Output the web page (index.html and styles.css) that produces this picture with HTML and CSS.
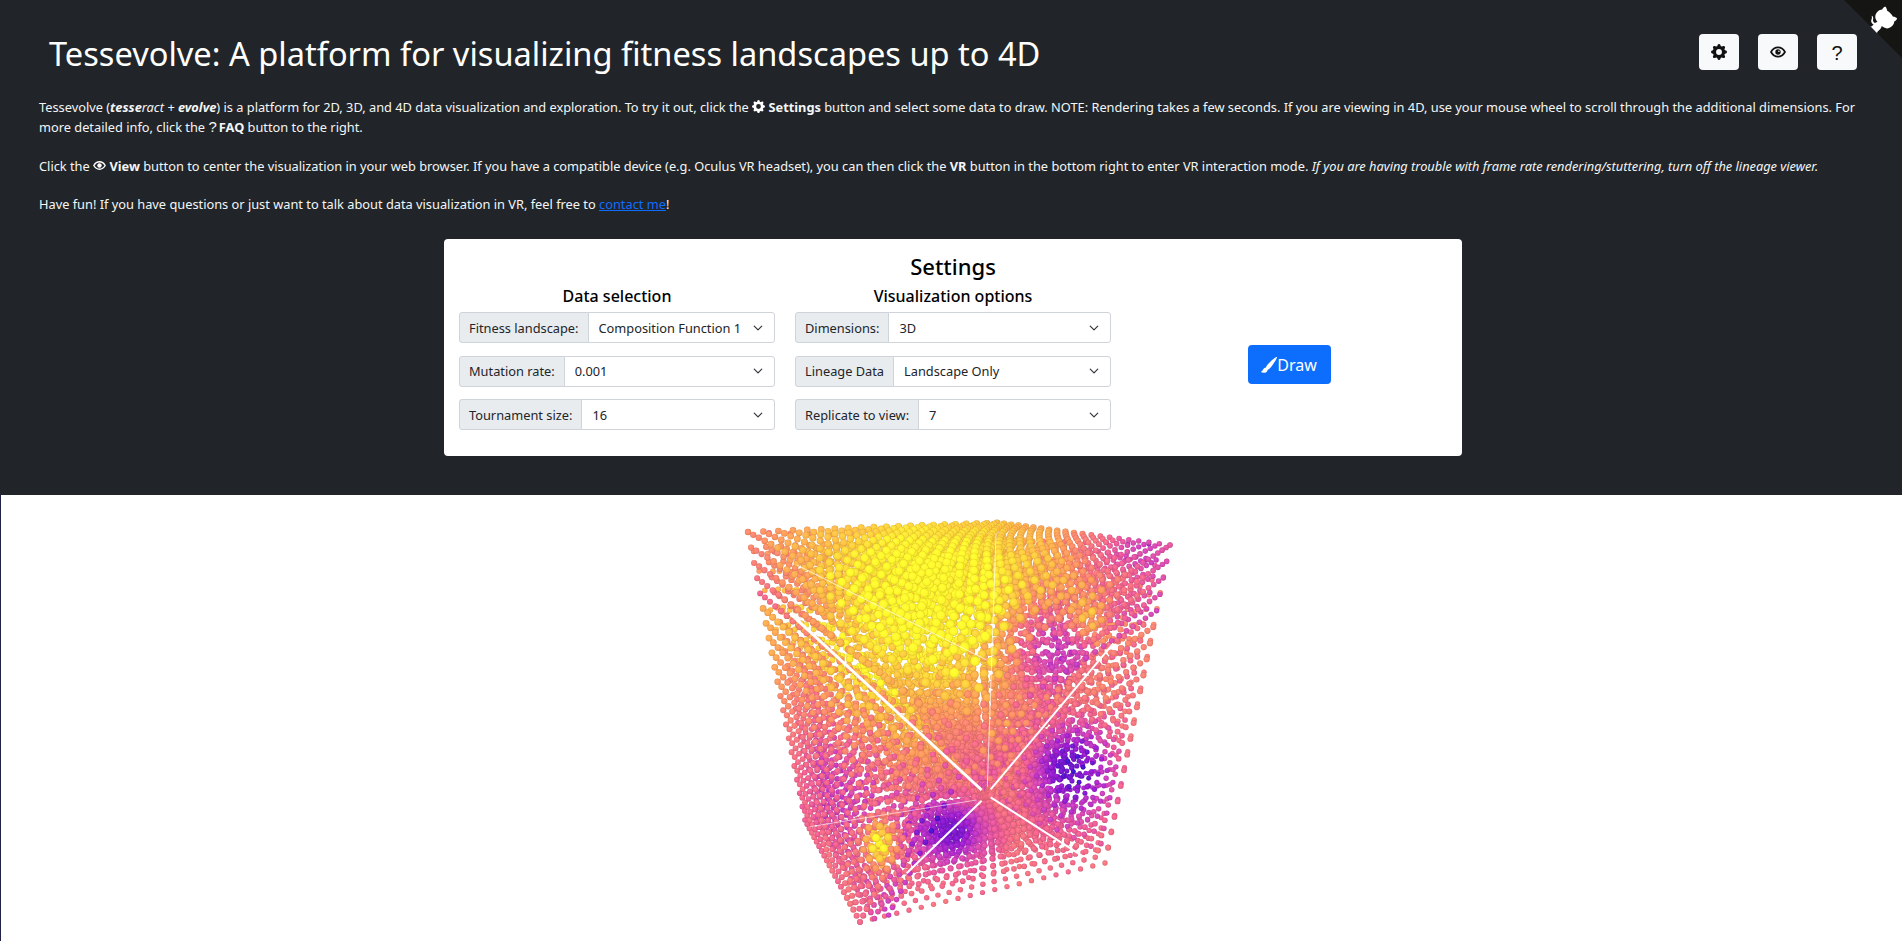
FILE: index.html
```html
<!DOCTYPE html>
<html lang="en">
<head>
    <meta charset="UTF-8">
    <meta name="viewport" content="width=device-width, initial-scale=1.0">
    <title>Tessevolve</title>
    <link rel="stylesheet" href="styles.css">
</head>
<body>
    <a class="github-corner" href="#" aria-label="View source on GitHub">
        <svg viewBox="0 0 250 250" aria-hidden="true">
            <path class="corner-bg" d="M0,0 L115,115 L130,115 L142,142 L250,250 L250,0 Z"></path>
            <path class="octo" d="M128.3,109.0 C113.8,99.7 119.0,89.6 119.0,89.6 C122.0,82.7 120.5,78.6 120.5,78.6 C119.2,72.0 123.4,76.3 123.4,76.3 C127.3,80.9 125.5,87.3 125.5,87.3 C122.9,97.6 130.6,101.9 134.4,103.2"></path>
            <path class="octo" d="M115.0,115.0 C114.9,115.1 118.7,116.5 119.8,115.4 L133.7,101.6 C136.9,99.2 139.9,98.4 142.2,98.6 C133.8,88.0 127.5,74.4 143.8,58.0 C148.5,53.4 154.0,51.2 159.7,51.0 C160.3,49.4 163.2,43.6 171.4,40.1 C171.4,40.1 176.1,42.5 178.8,56.2 C183.1,58.6 187.2,61.8 190.9,65.4 C194.5,69.0 197.7,73.2 200.1,77.6 C213.8,80.2 216.3,84.9 216.3,84.9 C212.7,93.1 206.9,96.0 205.4,96.6 C205.1,102.4 203.0,107.8 198.3,112.5 C181.9,128.9 168.3,122.5 157.7,114.1 C157.9,116.9 156.7,120.9 152.7,124.9 L141.0,136.5 C139.8,137.7 141.6,141.9 141.8,141.8 Z"></path>
        </svg>
    </a>

    <header class="top-panel">
        <div class="title-row">
            <h1>Tessevolve: A platform for visualizing fitness landscapes up to 4D</h1>
            <div class="top-buttons">
                <button class="btn-light" aria-label="Settings">
                    <svg class="icon" viewBox="0 0 16 16"><path d="M9.405 1.05c-.413-1.4-2.397-1.4-2.81 0l-.1.34a1.464 1.464 0 0 1-2.105.872l-.31-.17c-1.283-.698-2.686.705-1.987 1.987l.169.311c.446.82.023 1.841-.872 2.105l-.34.1c-1.4.413-1.4 2.397 0 2.81l.34.1a1.464 1.464 0 0 1 .872 2.105l-.17.31c-.698 1.283.705 2.686 1.987 1.987l.311-.169a1.464 1.464 0 0 1 2.105.872l.1.34c.413 1.4 2.397 1.4 2.81 0l.1-.34a1.464 1.464 0 0 1 2.105-.872l.31.17c1.283.698 2.686-.705 1.987-1.987l-.169-.311a1.464 1.464 0 0 1 .872-2.105l.34-.1c1.4-.413 1.4-2.397 0-2.81l-.34-.1a1.464 1.464 0 0 1-.872-2.105l.17-.31c.698-1.283-.705-2.686-1.987-1.987l-.311.169a1.464 1.464 0 0 1-2.105-.872l-.1-.34zM8 10.93a2.929 2.929 0 1 1 0-5.86 2.929 2.929 0 0 1 0 5.858z"></path></svg>
                </button>
                <button class="btn-light" aria-label="View">
                    <svg class="icon" viewBox="0 0 16 16"><path class="eye-line" d="M1 8s2.6-4.6 7-4.6S15 8 15 8s-2.6 4.6-7 4.6S1 8 1 8z"></path><circle cx="8" cy="8" r="2.7"></circle><circle class="eye-glint" cx="8.9" cy="7.2" r=".8"></circle></svg>
                </button>
                <button class="btn-light btn-faq" aria-label="FAQ">?</button>
            </div>
        </div>

        <p class="intro">
            Tessevolve (<em><b>tesse</b>ract + <b>e</b><b>volve</b></em>) is a platform for 2D, 3D, and 4D data visualization and exploration. To try it out, click the
            <svg class="icon-inline" viewBox="0 0 16 16"><path d="M9.405 1.05c-.413-1.4-2.397-1.4-2.81 0l-.1.34a1.464 1.464 0 0 1-2.105.872l-.31-.17c-1.283-.698-2.686.705-1.987 1.987l.169.311c.446.82.023 1.841-.872 2.105l-.34.1c-1.4.413-1.4 2.397 0 2.81l.34.1a1.464 1.464 0 0 1 .872 2.105l-.17.31c-.698 1.283.705 2.686 1.987 1.987l.311-.169a1.464 1.464 0 0 1 2.105.872l.1.34c.413 1.4 2.397 1.4 2.81 0l.1-.34a1.464 1.464 0 0 1 2.105-.872l.31.17c1.283.698 2.686-.705 1.987-1.987l-.169-.311a1.464 1.464 0 0 1 .872-2.105l.34-.1c1.4-.413 1.4-2.397 0-2.81l-.34-.1a1.464 1.464 0 0 1-.872-2.105l.17-.31c.698-1.283-.705-2.686-1.987-1.987l-.311.169a1.464 1.464 0 0 1-2.105-.872l-.1-.34zM8 10.93a2.929 2.929 0 1 1 0-5.86 2.929 2.929 0 0 1 0 5.858z"></path></svg>
            <b>Settings</b> button and select some data to draw. NOTE: Rendering takes a few seconds. If you are viewing in 4D, use your mouse wheel to scroll through the additional dimensions. For more detailed info, click the <span class="q-inline">?</span><b>FAQ</b> button to the right.
            <br><br>
            Click the
            <svg class="icon-inline" viewBox="0 0 16 16"><path class="eye-line" d="M1 8s2.6-4.6 7-4.6S15 8 15 8s-2.6 4.6-7 4.6S1 8 1 8z"></path><circle cx="8" cy="8" r="2.7"></circle></svg>
            <b>View</b> button to center the visualization in your web browser. If you have a compatible device (e.g. Oculus VR headset), you can then click the <b>VR</b> button in the bottom right to enter VR interaction mode. <em>If you are having trouble with frame rate rendering/stuttering, turn off the lineage viewer.</em>
            <br><br>
            Have fun! If you have questions or just want to talk about data visualization in VR, feel free to <a href="#">contact me</a>!
        </p>

        <section class="settings-card">
            <h2>Settings</h2>
            <div class="settings-grid">
                <div class="settings-col">
                    <h3>Data selection</h3>
                    <div class="input-group">
                        <label for="landscape">Fitness landscape:</label>
                        <select id="landscape"><option>Composition Function 1</option></select>
                    </div>
                    <div class="input-group">
                        <label for="mutation">Mutation rate:</label>
                        <select id="mutation"><option>0.001</option></select>
                    </div>
                    <div class="input-group">
                        <label for="tournament">Tournament size:</label>
                        <select id="tournament"><option>16</option></select>
                    </div>
                </div>
                <div class="settings-col">
                    <h3>Visualization options</h3>
                    <div class="input-group">
                        <label for="dimensions">Dimensions:</label>
                        <select id="dimensions"><option>3D</option></select>
                    </div>
                    <div class="input-group">
                        <label for="lineage">Lineage Data</label>
                        <select id="lineage"><option>Landscape Only</option></select>
                    </div>
                    <div class="input-group">
                        <label for="replicate">Replicate to view:</label>
                        <select id="replicate"><option>7</option></select>
                    </div>
                </div>
                <div class="draw-col">
                    <button class="btn-draw">
                        <svg class="icon-brush" viewBox="0 0 16 16"><path d="M15.825.12a.5.5 0 0 1 .132.584c-1.53 3.43-4.743 8.17-7.095 10.64a6.067 6.067 0 0 1-2.373 1.534c-.018.227-.06.538-.16.868-.201.659-.667 1.479-1.708 1.74a8.118 8.118 0 0 1-3.078.132 3.659 3.659 0 0 1-.562-.135 1.382 1.382 0 0 1-.466-.247.714.714 0 0 1-.204-.288.622.622 0 0 1 .004-.443c.095-.245.316-.38.461-.452.394-.197.625-.453.867-.826.095-.144.184-.297.287-.472l.117-.198c.151-.255.326-.54.546-.848.528-.739 1.201-.925 1.746-.896.126.007.243.025.348.048.062-.172.142-.38.238-.608.261-.619.658-1.419 1.187-2.069 2.176-2.67 6.18-6.206 9.117-8.104a.5.5 0 0 1 .596.04z"></path></svg>Draw
                    </button>
                </div>
            </div>
        </section>
    </header>

    <main class="viewer">
        <canvas id="scene" width="1901" height="446"></canvas>
    </main>

    <script src="scene.js"></script>
</body>
</html>
```

FILE: styles.css
```css
* {
    box-sizing: border-box;
}
html, body {
    height: 100%;
}
body {
    margin: 0;
    overflow: hidden;
    font-family: "Noto Sans", sans-serif;
    background-color: #212529;
    color: #212529;
}

.github-corner {
    position: absolute;
    top: -4px;
    right: -4px;
    width: 66px;
    height: 66px;
}
.github-corner svg {
    display: block;
    width: 100%;
    height: 100%;
}
.corner-bg {
    fill: #151513;
}
.octo {
    fill: #fff;
}

.top-panel {
    height: 495px;
    padding-top: 34px;
    background-color: #212529;
    color: #f8f9fa;
}
.title-row {
    display: flex;
    justify-content: space-between;
    padding: 0 45px 0 49px;
}
h1 {
    margin: 0;
    padding-top: 1px;
    font-size: 32.6px;
    font-weight: 400;
    line-height: 38px;
    color: #fff;
}
.top-buttons {
    display: flex;
    gap: 19px;
}
.btn-light {
    display: flex;
    align-items: center;
    justify-content: center;
    width: 40px;
    height: 36px;
    padding: 0;
    border: 0;
    border-radius: 4px;
    background-color: #f8f9fa;
    color: #111;
}
.btn-faq {
    font-family: "Liberation Sans", sans-serif;
    font-size: 20px;
    padding-top: 3px;
}
.icon {
    width: 16px;
    height: 16px;
    fill: currentColor;
}
.eye-line {
    fill: none;
    stroke: currentColor;
    stroke-width: 1.7;
}
.eye-glint {
    fill: #f8f9fa;
}

.intro {
    margin: 25px 0 0;
    padding: 0 39px;
    font-size: 12.8px;
    line-height: 19.2px;
    color: #f4f5f6;
}
.intro a {
    color: #0d6efd;
}
.icon-inline {
    width: 13px;
    height: 13px;
    fill: #fff;
    color: #fff;
    vertical-align: -1px;
}
.q-inline {
    font-family: "Liberation Sans", sans-serif;
    margin-right: 2px;
    font-size: 15px;
}

.settings-card {
    width: 1018px;
    height: 217px;
    margin: 25px 0 0 444px;
    padding: 13px 5px 0;
    border-radius: 4px;
    background-color: #fff;
    color: #212529;
}
h2 {
    margin: 0;
    font-size: 22px;
    font-weight: 500;
    line-height: 28px;
    text-align: center;
    color: #000;
}
.settings-grid {
    display: grid;
    grid-template-columns: repeat(3, 1fr);
}
.settings-col {
    padding: 0 10px;
}
h3 {
    margin: 0 0 4px;
    padding-top: 4px;
    font-size: 16px;
    font-weight: 500;
    line-height: 24px;
    text-align: center;
    color: #000;
}
.input-group {
    display: flex;
    height: 31px;
    margin-bottom: 12.5px;
    font-size: 12.8px;
}
.input-group label {
    display: flex;
    align-items: center;
    padding: 0 9px;
    border: 1px solid #ced4da;
    border-radius: 3px 0 0 3px;
    background-color: #e9ecef;
    white-space: nowrap;
}
.input-group select {
    flex: 1;
    min-width: 0;
    margin-left: -1px;
    padding: 0 28px 0 10px;
    border: 1px solid #ced4da;
    border-radius: 0 3px 3px 0;
    font-family: inherit;
    font-size: 12.8px;
    color: #212529;
    appearance: none;
    background: #fff url("data:image/svg+xml,%3csvg xmlns='http://www.w3.org/2000/svg' viewBox='0 0 16 16'%3e%3cpath fill='none' stroke='%23343a40' stroke-linecap='round' stroke-linejoin='round' stroke-width='2' d='M2 5l6 6 6-6'/%3e%3c/svg%3e") no-repeat right 11px center / 10px 10px;
}
.draw-col {
    display: flex;
    align-items: center;
    justify-content: center;
    padding-top: 7px;
}
.btn-draw {
    display: flex;
    align-items: center;
    justify-content: center;
    width: 83px;
    height: 39px;
    padding: 0;
    border: 0;
    border-radius: 4px;
    background-color: #0d6efd;
    color: #fff;
    font-family: inherit;
    font-size: 16px;
}
.icon-brush {
    width: 16px;
    height: 16px;
    fill: #fff;
}

.viewer {
    height: 446px;
    border-left: 1px solid #23234a;
    background-color: #fff;
}
#scene {
    display: block;
}
```

FILE: scene.js
```js
// landscape points, drawn far to near
const canvas = document.getElementById('scene');
const ctx = canvas.getContext('2d');
const N = 21;
const offsetX = 1;
const offsetY = 495;

// cube corners on the page, [x, y, depth]
const corners = {
    near: [992, 662, 1.0],
    tl: [748, 532, 2.4],
    tr: [1170, 545, 2.4],
    bot: [860, 922, 2.1],
    top: [997, 523, 3.0],
    br: [1105, 863, 2.5],
    left: [805, 820, 2.6],
    far: [987, 793, 3.0]
};

const stops = [
    [0.0, [58, 16, 200]],
    [0.2, [150, 24, 208]],
    [0.35, [204, 60, 190]],
    [0.5, [238, 92, 144]],
    [0.7, [255, 144, 96]],
    [0.85, [255, 192, 64]],
    [1.0, [255, 246, 42]]
];

function plasma(v) {
    v = Math.max(0, Math.min(1, v));
    for (let i = 1; i < stops.length; i++) {
        if (v <= stops[i][0]) {
            const t = (v - stops[i - 1][0]) / (stops[i][0] - stops[i - 1][0]);
            return stops[i - 1][1].map((c, n) => Math.round(c + (stops[i][1][n] - c) * t));
        }
    }
    return stops[stops.length - 1][1];
}

function blob(x, y, cx, cy, sx, sy, amp) {
    const dx = (x - cx) / sx;
    const dy = (y - cy) / sy;
    return amp * Math.exp(-(dx * dx + dy * dy));
}

// fitness, read off by page position
function fitness(x, y, a, b, c) {
    const zx = (x - 720) * 3;
    const zy = (y - 510) * 3;
    let f = 0.56;
    f += blob(zx, zy, 620, 320, 480, 360, 0.62);
    f += blob(zx, zy, 1000, 410, 150, 130, -0.36);
    f += blob(zx, zy, 1240, 120, 150, 80, -0.25);
    f += blob(zx, zy, 1110, 340, 60, 70, 0.3);
    f += blob(zx, zy, 1050, 770, 120, 140, -0.52);
    f += blob(zx, zy, 690, 960, 110, 100, -0.46);
    f += blob(zx, zy, 480, 1000, 50, 70, 0.5);
    f += blob(zx, zy, 240, 560, 130, 200, -0.08);
    f += blob(zx, zy, 330, 820, 170, 170, -0.1);
    f += 0.035 * Math.sin(a * 19 + c * 11) * Math.cos(b * 17 - c * 7);
    return f;
}

function project(u, v, w) {
    const weights = [
        [corners.near, (1 - u) * (1 - v) * (1 - w)],
        [corners.tl, u * (1 - v) * (1 - w)],
        [corners.tr, (1 - u) * v * (1 - w)],
        [corners.bot, (1 - u) * (1 - v) * w],
        [corners.top, u * v * (1 - w)],
        [corners.br, (1 - u) * v * w],
        [corners.left, u * (1 - v) * w],
        [corners.far, u * v * w]
    ];
    let x = 0, y = 0, z = 0, sum = 0;
    for (const [c, b] of weights) {
        const h = b * c[2];
        x += c[0] * h;
        y += c[1] * h;
        z += c[2] * b;
        sum += h;
    }
    return { x: x / sum, y: y / sum, z: z };
}

// top triangle, between the two upper arms of the star
function inUpperZone(x, y) {
    const cx = 987, cy = 793;
    if (x < cx) {
        return y < cy - (cx - x) * 1.1;
    }
    return y < cy - (x - cx) * 1.36;
}

function drawBall(p) {
    const x = p.x - offsetX, y = p.y - offsetY;
    const c = plasma(p.f);
    const g = ctx.createRadialGradient(x - p.r * 0.25, y - p.r * 0.3, p.r * 0.1, x, y, p.r);
    g.addColorStop(0, `rgb(${c.map(n => Math.min(255, n + 14)).join(',')})`);
    g.addColorStop(0.72, `rgb(${c.join(',')})`);
    g.addColorStop(1, `rgb(${c.map(n => Math.round(n * 0.86)).join(',')})`);
    ctx.fillStyle = g;
    ctx.beginPath();
    ctx.arc(x, y, p.r, 0, Math.PI * 2);
    ctx.fill();
}

// back block: rows that all run into the far corner
const tl = corners.tl, tr = corners.tr, br = corners.br, bot = corners.bot;
const far = corners.far;
const back = [];
const layers = 15;
for (let i = 0; i < N; i++) {
    for (let j = 0; j < N; j++) {
        const a = i / (N - 1), b = j / (N - 1);
        const qx = (1 - a) * (1 - b) * tl[0] + a * (1 - b) * tr[0] + a * b * br[0] + (1 - a) * b * bot[0];
        const qy = (1 - a) * (1 - b) * tl[1] + a * (1 - b) * tr[1] + a * b * br[1] + (1 - a) * b * bot[1];
        for (let k = 0; k < layers; k++) {
            const t = Math.pow(1 - k / layers, 1.25);
            if (t < 0.45 && (i % 2 || j % 2)) continue;
            if (t < 0.22 && (i % 4 || j % 4)) continue;
            const x = far[0] + (qx - far[0]) * t;
            const y = far[1] + (qy - far[1]) * t;
            let f = fitness(x, y, a, b, t);
            if (inUpperZone(x, y)) f -= 0.15;
            const r = (2.7 + 1.4 * (1 - t)) * (0.8 + 0.3 * Math.max(0, Math.min(1, f)));
            back.push({ x: x, y: y, z: t, f: f, r: r });
        }
    }
}
back.sort((p, q) => q.z - p.z);
back.forEach(drawBall);

// front shell: the three lattice faces turned to the camera
const shell = [];
for (let i = 0; i < N; i++) {
    for (let j = 0; j < N; j++) {
        for (let k = 0; k < N; k++) {
            const p = project(i / (N - 1), j / (N - 1), k / (N - 1));
            const belowRight = p.y > far[1] + (p.x - far[0]) * 0.59;
            let d;
            if (k <= 4) d = k * 0.6;
            else if (j <= 2) d = j;
            else if (i <= 1 && !belowRight) d = i;
            else continue;
            p.f = fitness(p.x, p.y, i / (N - 1), j / (N - 1), k / (N - 1)) - 0.1 * d;
            const f = Math.max(0, Math.min(1, p.f));
            p.r = (2.6 + 2.0 / p.z) * (0.72 + 0.45 * f * f);
            shell.push(p);
        }
    }
}
shell.sort((p, q) => q.z - p.z);
shell.forEach(drawBall);

// white gaps where lattice planes line up with the camera
function gap(x1, y1, x2, y2, width, alpha) {
    ctx.strokeStyle = `rgba(255,255,255,${alpha})`;
    ctx.lineWidth = width;
    ctx.beginPath();
    ctx.moveTo(720 + x1 / 3 - offsetX, 510 + y1 / 3 - offsetY);
    ctx.lineTo(720 + x2 / 3 - offsetX, 510 + y2 / 3 - offsetY);
    ctx.stroke();
}
gap(210, 310, 785, 840, 3, 1);
gap(1180, 400, 812, 838, 2, 1);
gap(560, 1090, 785, 872, 2, 1);
gap(1090, 1040, 812, 862, 2, 1);
gap(828, 70, 802, 830, 1, 0.7);
gap(230, 165, 800, 450, 1, 0.7);
gap(270, 950, 770, 870, 1, 0.6);
```
